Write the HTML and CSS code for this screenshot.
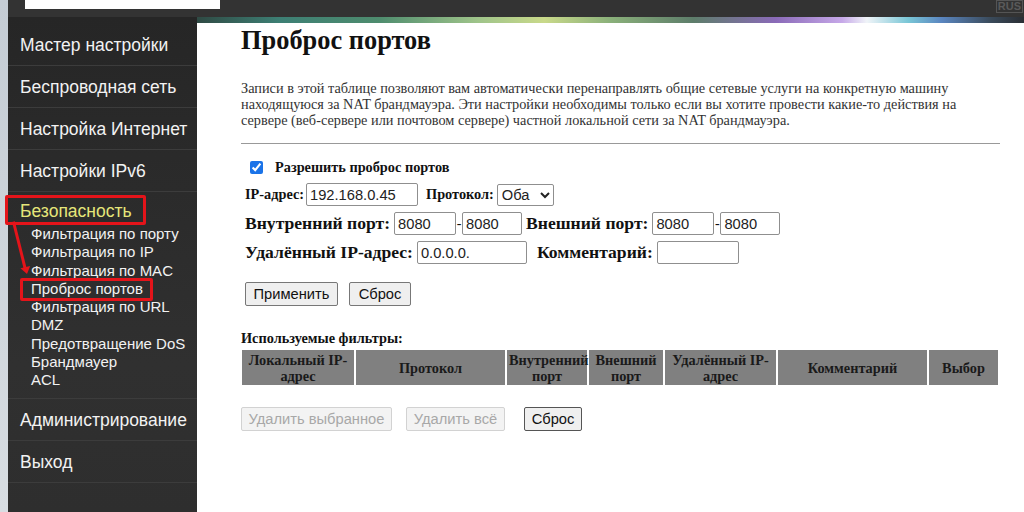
FILE: index.html
```html
<!DOCTYPE html>
<html lang="ru">
<head>
<meta charset="utf-8">
<link rel="stylesheet" href="styles.css">
</head>
<body>
<div class="edge"></div>
<div class="frame">
  <header class="topbar">
    <div class="searchbox"></div>
    <div class="lang">RUS</div>
  </header>
  <div class="layout">
    <nav class="sidebar">
      <div class="nav-item">Мастер настройки</div>
      <div class="nav-item">Беспроводная сеть</div>
      <div class="nav-item">Настройка Интернет</div>
      <div class="nav-item">Настройки IPv6</div>
      <div class="nav-group">
        <div class="nav-title">Безопасность</div>
        <ul class="sub">
          <li>Фильтрация по порту</li>
          <li>Фильтрация по IP</li>
          <li>Фильтрация по MAC</li>
          <li class="current">Проброс портов</li>
          <li>Фильтрация по URL</li>
          <li>DMZ</li>
          <li>Предотвращение DoS</li>
          <li>Брандмауер</li>
          <li>ACL</li>
        </ul>
        <div class="mark mark-title"></div>
        <div class="mark mark-sub"></div>
        <div class="mark-line"></div>
      </div>
      <div class="nav-item">Администрирование</div>
      <div class="nav-item">Выход</div>
    </nav>
    <main class="main">
      <div class="stripe"></div>
      <div class="content">
        <h1>Проброс портов</h1>
        <p class="intro">Записи в этой таблице позволяют вам автоматически перенаправлять общие сетевые услуги на конкретную машину находящуюся за NAT брандмауэра. Эти настройки необходимы только если вы хотите провести какие-то действия на сервере (веб-сервере или почтовом сервере) частной локальной сети за NAT брандмауэра.</p>
        <hr>
        <div class="row row-check">
          <input type="checkbox" checked>
          <b class="small">Разрешить проброс портов</b>
        </div>
        <div class="row">
          <b class="small">IP-адрес:</b>
          <input class="field w-ip" type="text" value="192.168.0.45">
          <b class="small lbl-proto">Протокол:</b>
          <select class="sel"><option>Оба</option></select>
        </div>
        <div class="row">
          <b class="big">Внутренний порт:</b>
          <input class="field w-port" type="text" value="8080"><span class="dash">-</span><input class="field w-port after-dash" type="text" value="8080">
          <b class="big lbl-next">Внешний порт:</b>
          <input class="field w-port" type="text" value="8080"><span class="dash">-</span><input class="field w-port after-dash" type="text" value="8080">
        </div>
        <div class="row">
          <b class="big">Удалённый IP-адрес:</b>
          <input class="field w-rip" type="text" value="0.0.0.0.">
          <b class="big lbl-com">Комментарий:</b>
          <input class="field w-com" type="text" value="">
        </div>
        <div class="buttons">
          <button class="btn">Применить</button>
          <button class="btn">Сброс</button>
        </div>
        <b class="small caption">Используемые фильтры:</b>
        <table class="filters">
          <tr>
            <th class="c1">Локальный IP-адрес</th>
            <th class="c2">Протокол</th>
            <th class="c3">Внутренний порт</th>
            <th class="c4">Внешний порт</th>
            <th class="c5">Удалённый IP-адрес</th>
            <th class="c6">Комментарий</th>
            <th class="c7">Выбор</th>
          </tr>
        </table>
        <div class="buttons bottom">
          <button class="btn b-del" disabled>Удалить выбранное</button>
          <button class="btn b-all" disabled>Удалить всё</button>
          <button class="btn dark b-reset">Сброс</button>
        </div>
      </div>
    </main>
  </div>
</div>
</body>
</html>
```
FILE: styles.css
```css
* { box-sizing: border-box; }
html, body { margin: 0; padding: 0; height: 100%; }
body {
  display: flex;
  width: 1024px;
  height: 512px;
  overflow: hidden;
  background: #fff;
  font-family: "Liberation Sans", Arial, sans-serif;
}
.edge {
  width: 8px;
  flex: none;
  background: linear-gradient(to bottom, #c4ccd4, #d8dde2);
}
.frame {
  flex: 1;
  display: flex;
  flex-direction: column;
  min-width: 0;
}
.topbar {
  height: 17px;
  flex: none;
  background: #333333;
  display: flex;
  justify-content: space-between;
  align-items: flex-start;
}
.searchbox {
  margin-left: 17px;
  width: 195px;
  height: 9px;
  background: #fff;
}
.lang {
  font-size: 11px;
  line-height: 11px;
  color: #5a5a5a;
  border: 1px solid #555;
  padding: 0 1px;
  margin-right: 1px;
  font-weight: bold;
}
.layout {
  flex: 1;
  display: flex;
  min-height: 0;
}
.sidebar {
  width: 189px;
  flex: none;
  background: linear-gradient(to bottom, #262626, #303030 70%, #2e2e2e);
  color: #f2f2f2;
  padding-top: 7px;
}
.nav-item {
  height: 42px;
  line-height: 42px;
  font-size: 17.5px;
  padding-left: 12px;
  border-bottom: 1px solid #3c3c3c;
  white-space: nowrap;
}
.nav-group {
  position: relative;
  padding-top: 5px;
  padding-bottom: 8px;
  border-bottom: 1px solid #3c3c3c;
}
.nav-title {
  font-size: 17.5px;
  line-height: 28px;
  padding-left: 12px;
  color: #e6e67a;
}
.sub {
  list-style: none;
  margin: 0;
  padding: 0 0 0 23px;
  font-size: 15px;
  line-height: 18.3px;
  color: #f2f2f2;
}
.mark {
  position: absolute;
  border: 3px solid #e4141a;
  border-radius: 2px;
}
.mark-title { left: -3px; top: 3px; width: 141px; height: 30px; }
.mark-sub { left: 12px; top: 86px; width: 133px; height: 23px; }
.mark-line {
  position: absolute;
  left: 4px;
  top: 30px;
  width: 3px;
  height: 50px;
  background: #e4141a;
  transform: rotate(-14deg);
  transform-origin: top left;
}
.mark-line::after {
  content: "";
  position: absolute;
  left: -3px;
  bottom: -4px;
  border-left: 5px solid transparent;
  border-right: 5px solid transparent;
  border-top: 7px solid #e4141a;
}
.main {
  flex: 1;
  min-width: 0;
  display: flex;
  flex-direction: column;
}
.stripe {
  height: 6px;
  flex: none;
  background: linear-gradient(to right, #2f4a44 0%, #3d7f74 10%, #4e8c6e 22%, #9fc48a 34%, #c9d98a 42%, #8ab07a 50%, #5d7d6a 60%, #8a6ab8 70%, #c6a8e8 78%, #f0f4f8 81%, #79c6d6 86%, #5a86c0 90%, #3a4a5a 96%, #2a2e34 100%);
}
.content {
  padding: 0 0 0 44px;
  width: 810px;
  font-family: "Liberation Serif", "Times New Roman", serif;
  color: #111;
}
h1 {
  font-size: 26.4px;
  font-weight: bold;
  margin: 2px 0 0 0;
  line-height: 30px;
}
.intro {
  font-size: 14.3px;
  line-height: 16px;
  color: #333;
  margin: 25px 0 0 0;
  width: 745px;
}
hr {
  margin: 15px 0 0 0;
  width: 759px;
  border: 0;
  border-top: 1px solid #999;
}
.row {
  display: flex;
  align-items: center;
  height: 29px;
  margin-left: 4px;
  white-space: nowrap;
}
.row-check { margin-top: 11px; height: 25px; }
.row-check input { margin: 0 12px 0 5px; width: 13px; height: 13px; accent-color: #1a73e8; }
.small { font-size: 14.3px; }
.big { font-size: 17.6px; }
.field {
  font-family: "Liberation Sans", Arial, sans-serif;
  font-size: 14.7px;
  height: 23px;
  border: 1px solid #8f8f8f;
  border-radius: 2px;
  padding: 1px 3px;
  color: #222;
  margin-left: 4px;
}
.w-ip { width: 112px; margin-left: 2px; }
.w-port { width: 62px; }
.w-rip { width: 110px; }
.w-com { width: 82px; }
.after-dash { margin-left: 0; width: 60px; }
.dash { font-size: 14px; width: 6px; text-align: center; }
.lbl-proto { margin-left: 8px; }
.lbl-next { margin-left: 4px; }
.lbl-com { margin-left: 10px; }
.sel {
  font-family: "Liberation Sans", Arial, sans-serif;
  font-size: 14.7px;
  height: 22px;
  width: 57px;
  margin-left: 3px;
  border: 1px solid #8f8f8f;
  border-radius: 2px;
  background: #fff;
  color: #222;
}
.buttons {
  display: flex;
  gap: 11px;
  margin: 15px 0 0 4px;
}
.btn {
  font-family: "Liberation Sans", Arial, sans-serif;
  font-size: 14.7px;
  height: 24px;
  padding: 0;
  white-space: nowrap;
  border: 1px solid #777;
  border-radius: 2px;
  background: #efefef;
  color: #111;
}
.buttons .btn:first-child { width: 93px; }
.buttons .btn:nth-child(2) { width: 62px; }
.btn:disabled {
  color: #a8a8a8;
  border-color: #d2d2d2;
  background: #f3f3f3;
}
.caption { display: block; margin: 24px 0 0 0; line-height: 17px; }
.filters {
  margin: 3px 0 0 -1px;
  border-collapse: separate;
  border-spacing: 2px 0;
  width: 760px;
  table-layout: fixed;
}
.filters th {
  background: #808080;
  color: #1a1a1a;
  font-size: 14.3px;
  font-weight: bold;
  line-height: 16px;
  height: 35px;
  padding: 0 2px;
  text-align: center;
}
.c1 { width: 112px; }
.c2 { width: 149px; }
.c3 { width: 80px; }
.c4 { width: 74px; }
.c5 { width: 111px; }
.c6 { width: 149px; }
.c7 { width: 69px; }
.bottom { margin: 22px 0 0 0; gap: 14px; }
.bottom .btn.b-del { width: 151px; }
.bottom .btn.b-all { width: 99px; }
.bottom .btn.b-reset { width: 58px; margin-left: 5px; }
.dark { border-color: #555; }
```
